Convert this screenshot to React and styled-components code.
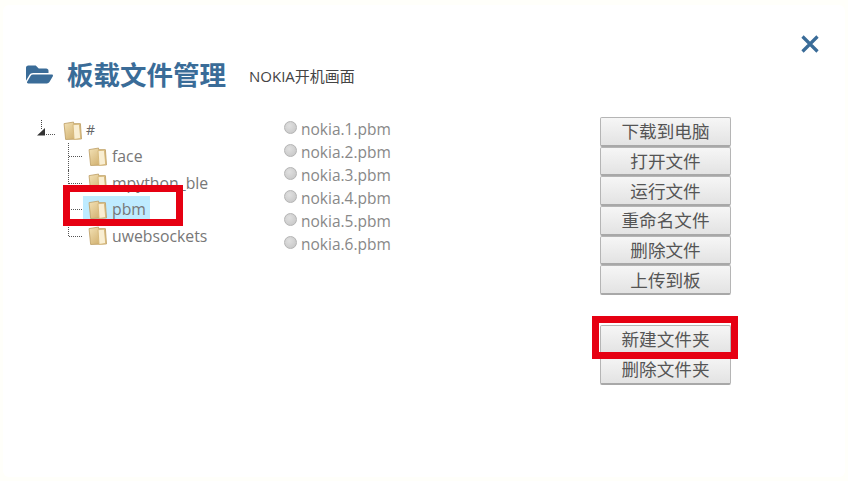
import React from 'react';
import styled, { createGlobalStyle } from 'styled-components';
import { FaFolderOpen } from 'react-icons/fa';

// ----- DATA

const CJK = '"Noto Sans CJK SC", sans-serif';
const LATIN = '"Open Sans", "Noto Sans CJK SC", sans-serif';

const FOLDERS = ['face', 'mpython_ble', 'pbm', 'uwebsockets'];
const FILES = ['nokia.1.pbm', 'nokia.2.pbm', 'nokia.3.pbm', 'nokia.4.pbm', 'nokia.5.pbm', 'nokia.6.pbm'];
const FILE_ACTIONS = ['下载到电脑', '打开文件', '运行文件', '重命名文件', '删除文件', '上传到板'];
const FOLDER_ACTIONS = ['新建文件夹', '删除文件夹'];

// ----- STYLES

const GlobalStyle = createGlobalStyle`
	html, body {
		margin: 0;
		padding: 0;
		background: #fffffa;
	}
`;
const Modal = styled.div`
	position: relative;
	box-sizing: border-box;
	width: 848px;
	height: 481px;
	padding: 5px 3px 4px;
	overflow: hidden;
`;
const Sheet = styled.div`
	box-sizing: border-box;
	height: 100%;
	background: #fff;
	border-radius: 6px;
	padding: 49px 23px 0;
	display: flex;
	flex-direction: column;
`;
const Header = styled.header`
	display: flex;
	align-items: center;
	height: 40px;
	color: #3a6c98;
`;
const HeaderIcon = styled(FaFolderOpen)`
	width: 27px;
	height: 25px;
	margin-right: 14px;
	flex: none;
`;
const Title = styled.h1`
	margin: 0 23px 0 0;
	font: 700 26.5px/40px ${CJK};
	white-space: nowrap;
`;
const Subtitle = styled.span`
	font: 400 15px/20px ${LATIN};
	color: #444;
	margin-top: 4px;
`;
const CloseIcon = styled.svg`
	width: 20px;
	height: 20px;
	align-self: flex-start;
	margin: -20px 2px 0 auto;
	flex: none;
`;
const Body = styled.div`
	display: grid;
	grid-template-columns: 246px 316px 131px;
	margin: 24px 0 0 12px;
`;
const TreeRoot = styled.div`
	position: relative;
`;
const RootRow = styled.div`
	display: flex;
	align-items: center;
	height: 26px;
	margin-top: -1px;
	font: 400 14px/26px ${LATIN};
	color: #666;
`;
const Expander = styled.svg`
	width: 25px;
	height: 20px;
	margin-left: -2px;
	margin-right: 2px;
	flex: none;
`;
const TreeList = styled.ul`
	list-style: none;
	margin: 0;
	padding: 0 0 0 30px;
`;
const TreeItem = styled.li`
	position: relative;
	display: flex;
	align-items: center;
	height: 26.5px;
	padding-left: 15px;
	&::before {
		content: '';
		position: absolute;
		left: 1px;
		top: 50%;
		width: 13px;
		border-top: 1px dotted #555;
	}
	&::after {
		content: '';
		position: absolute;
		left: 0;
		top: 0;
		height: ${({ $last }) => ($last ? '50%' : '100%')};
		border-left: 1px dotted #555;
	}
`;
const NodeLabel = styled.span`
	display: inline-flex;
	align-items: center;
	height: 26px;
	padding-right: 4px;
	font: 400 15.8px/26px ${LATIN};
	color: #777;
	background: ${({ $selected }) => ($selected ? '#beebff' : 'transparent')};
`;
const FolderSvg = styled.svg`
	width: 19px;
	height: 19px;
	margin: 0 5px 0 5px;
	flex: none;
`;
const RootFolder = styled(FolderSvg)`
	margin: 0 4px 0 0;
`;
const FileList = styled.div`
	display: flex;
	flex-direction: column;
`;
const FileRow = styled.label`
	display: flex;
	align-items: center;
	height: 23px;
	font: 400 15.5px/23px ${LATIN};
	color: #888;
`;
const RadioDot = styled.span`
	width: 13px;
	height: 13px;
	border-radius: 50%;
	margin: -4px 4px 0 0;
	box-sizing: border-box;
	border: 1px solid #b4b4b4;
	background: radial-gradient(circle at 40% 35%, #e0e0e0, #c4c4c4);
	flex: none;
`;
const ActionColumn = styled.div`
	display: flex;
	flex-direction: column;
	margin-top: -1px;
`;
const ButtonGroup = styled.div`
	display: flex;
	flex-direction: column;
	margin-bottom: ${({ $gap }) => $gap || 0}px;
`;
const ActionButton = styled.button`
	box-sizing: border-box;
	width: 131px;
	height: 29.7px;
	padding: 0;
	border: 1px solid #b5b5b5;
	border-bottom: 2px solid #a8a8a8;
	border-radius: 2px;
	background: linear-gradient(#f6f6f6, #e3e3e3);
	font: 400 17.6px/26px ${CJK};
	color: #555;
`;
const Marker = styled.div`
	position: absolute;
	box-sizing: border-box;
	left: ${({ $x }) => $x}px;
	top: ${({ $y }) => $y}px;
	width: ${({ $w }) => $w}px;
	height: ${({ $h }) => $h}px;
	border: 7px solid #e60012;
	pointer-events: none;
`;

// ----- ICONS

const FolderDrawing = () => (
	<>
		<defs>
			<linearGradient id="folderFill" x1="0" y1="0" x2="1" y2="1">
				<stop offset="0" stopColor="#f3e2b6" />
				<stop offset="1" stopColor="#c9a45e" />
			</linearGradient>
		</defs>
		<path d="M1 2.5 L10 1 L10 2.5 L16.5 2.5 L17.5 17 L2.5 17.5 Z" fill="url(#folderFill)" stroke="#bfa067" strokeWidth="0.8" />
		<path d="M9.5 3.5 L15.5 3 L16.8 16.5 L10.5 17.5 Z" fill="#f9eed2" stroke="#d4b676" strokeWidth="0.8" />
	</>
);

const RootExpander = () => (
	<Expander viewBox="0 0 25 20">
		<path d="M5.5 0 V9" stroke="#444" strokeDasharray="1 1" />
		<path d="M1 15.5 L9 15.5 L9 8 Z" fill="#333" />
		<path d="M10 14.5 H19" stroke="#555" strokeDasharray="1 1" />
	</Expander>
);

// ----- PAGE

export default function App() {
	return (
		<Modal>
			<GlobalStyle />
			<Sheet>
				<Header>
					<HeaderIcon />
					<Title>板载文件管理</Title>
					<Subtitle>NOKIA开机画面</Subtitle>
					<CloseIcon viewBox="0 0 20 20">
						<path d="M2.5 2.5 L17.5 17.5 M17.5 2.5 L2.5 17.5" stroke="#3a6c98" strokeWidth="3.2" />
					</CloseIcon>
				</Header>
				<Body>
					<TreeRoot>
						<RootRow>
							<RootExpander />
							<RootFolder viewBox="0 0 18 18"><FolderDrawing /></RootFolder>
							#
						</RootRow>
						<TreeList>
							{FOLDERS.map((name, i) => (
								<TreeItem key={name} $last={i === FOLDERS.length - 1}>
									<NodeLabel $selected={name === 'pbm'}>
										<FolderSvg viewBox="0 0 18 18"><FolderDrawing /></FolderSvg>
										{name}
									</NodeLabel>
								</TreeItem>
							))}
						</TreeList>
					</TreeRoot>
					<FileList>
						{FILES.map(name => (
							<FileRow key={name}>
								<RadioDot />
								{name}
							</FileRow>
						))}
					</FileList>
					<ActionColumn>
						<ButtonGroup $gap={30}>
							{FILE_ACTIONS.map(label => <ActionButton key={label}>{label}</ActionButton>)}
						</ButtonGroup>
						<ButtonGroup>
							{FOLDER_ACTIONS.map(label => <ActionButton key={label}>{label}</ActionButton>)}
						</ButtonGroup>
					</ActionColumn>
				</Body>
			</Sheet>
			<Marker $x={63} $y={185} $w={120} $h={41} />
			<Marker $x={592} $y={316} $w={146} $h={43} />
		</Modal>
	);
}
